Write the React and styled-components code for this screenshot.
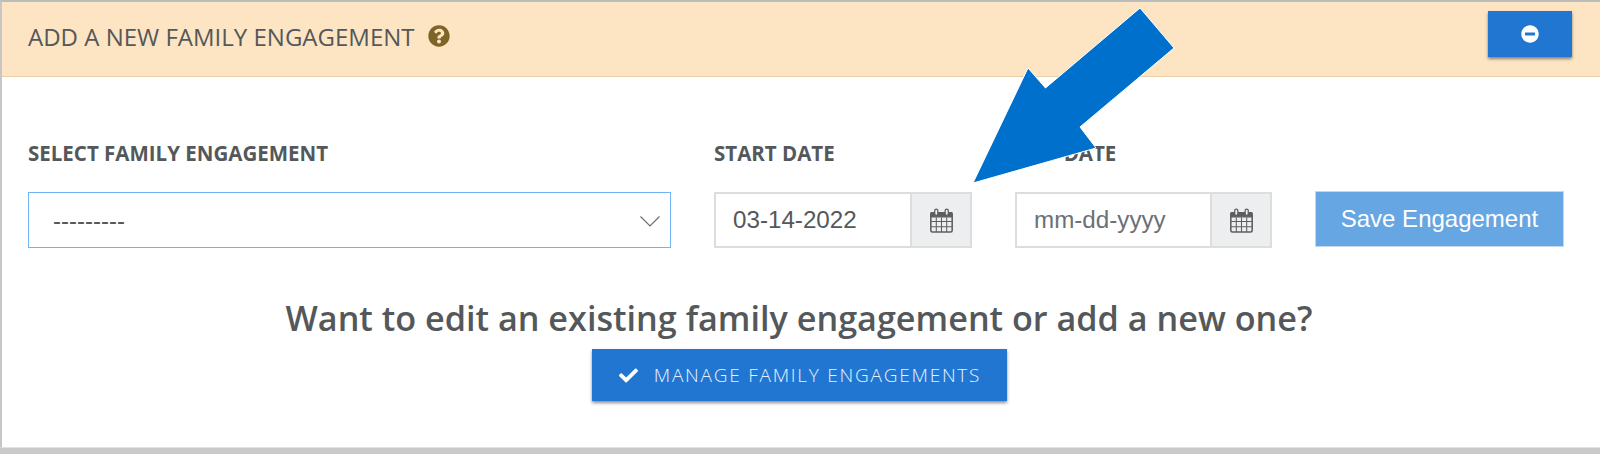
import React from "react";
import styled, { createGlobalStyle } from "styled-components";
import { FaQuestionCircle, FaMinusCircle, FaCheck } from "react-icons/fa";

const Global = createGlobalStyle`
  html, body { margin: 0; padding: 0; background: #c9c9c7; }
  * { box-sizing: border-box; }
`;

const Page = styled.div`
  position: relative;
  width: 1600px;
  height: 454px;
  overflow: hidden;
  background: #c9c9c7;
`;

const Panel = styled.section`
  height: 448px;
  background: #fff;
  border-top: 2px solid #b9bdbd;
  border-left: 2px solid #c6c6c6;
  border-bottom: 1px solid #e2e2de;
`;

const Header = styled.header`
  height: 75px;
  display: flex;
  align-items: center;
  justify-content: space-between;
  padding: 0 28px 6px 26px;
  background: #fde5c4;
  border-bottom: 1px solid #e8cfa8;
`;

const Title = styled.h2`
  display: flex;
  align-items: center;
  gap: 13px;
  margin: 0;
  font: 400 24px "Open Sans", sans-serif;
  color: #54585a;
`;

const Help = styled(FaQuestionCircle)`
  width: 22px;
  height: 22px;
  color: #7f6428;
`;

const CollapseButton = styled.button`
  width: 84px;
  height: 46px;
  margin-top: -4px;
  display: flex;
  align-items: center;
  justify-content: center;
  background: #2176d2;
  color: #fff;
  border: none;
  box-shadow: 0 2px 3px rgba(0, 0, 0, 0.45);
  font-size: 18px;
`;

const Form = styled.div`
  display: grid;
  grid-template-columns: 643px 258px 257px 249px;
  column-gap: 43px;
  padding: 64px 0 0 26px;
`;

const Field = styled.div`
  display: flex;
  flex-direction: column;
  gap: 26px;
`;

const Label = styled.label`
  height: 25px;
  font: 700 20.5px/25px "Open Sans", sans-serif;
  color: #54585a;
`;

const SelectBox = styled.div`
  height: 56px;
  display: flex;
  align-items: center;
  justify-content: space-between;
  padding: 2px 10px 0 24px;
  border: 1.5px solid #6db3f5;
  font: 400 24px "Liberation Sans", sans-serif;
  color: #54585a;
`;

const DateGroup = styled.div`
  height: 56px;
  display: flex;
  border: 2px solid #dcdddd;
`;

const DateValue = styled.div`
  flex: 1;
  display: flex;
  align-items: center;
  padding-left: 17px;
  font: 400 24.2px "Liberation Sans", sans-serif;
  color: ${(p) => (p.$placeholder ? "#6b7076" : "#54585a")};
`;

const Addon = styled.div`
  width: 60px;
  display: flex;
  align-items: center;
  justify-content: center;
  background: #edeeef;
  border-left: 2px solid #dcdddd;
`;

const SaveButton = styled.button`
  height: 56px;
  margin-top: 50px;
  background: #66a6e2;
  border: 1px solid #c4d8ec;
  color: #fff;
  font: 400 24px "Liberation Sans", sans-serif;
`;

const Cta = styled.div`
  display: flex;
  flex-direction: column;
  align-items: center;
  padding: 47px 4px 0 0;
`;

const Question = styled.h3`
  margin: 0;
  font: 600 34.2px/46px "Open Sans", sans-serif;
  color: #54585a;
`;

const ManageButton = styled.button`
  width: 415px;
  height: 52px;
  margin-top: 8px;
  display: flex;
  align-items: center;
  justify-content: center;
  gap: 16px;
  padding-left: 8px;
  background: #2176d2;
  color: #e8f2fc;
  border: none;
  box-shadow: 0 2px 3px rgba(0, 0, 0, 0.45);
  font: 300 19px "Open Sans", sans-serif;
  letter-spacing: 1.76px;
`;

const Arrow = styled.svg`
  position: absolute;
  left: 0;
  top: 0;
  pointer-events: none;
`;

const Calendar = () => (
  <svg width="23" height="25" viewBox="0 0 22 24" fill="none" stroke="#5b5f61">
    <rect x="0.75" y="4.5" width="20.5" height="18.5" rx="1.5" strokeWidth="1.5" />
    <path d="M1 4.5h20v4H1z" fill="#5b5f61" />
    <path d="M1 13h20M1 18h20M6 9v14M11 9v14M16 9v14" strokeWidth="1" />
    <rect x="4.5" y="1" width="3" height="6" rx="1.5" fill="#edeeef" strokeWidth="1.2" />
    <rect x="14.5" y="1" width="3" height="6" rx="1.5" fill="#edeeef" strokeWidth="1.2" />
  </svg>
);

const Chevron = () => (
  <svg width="20" height="11" viewBox="0 0 20 11" fill="none" stroke="#6a6e70" strokeWidth="1.2">
    <path d="M0.5 0.5L10 10l9.5-9.5" />
  </svg>
);

export default function App() {
  return (
    <Page>
      <Global />
      <Panel>
        <Header>
          <Title>
            ADD A NEW FAMILY ENGAGEMENT <Help />
          </Title>
          <CollapseButton aria-label="Collapse">
            <FaMinusCircle />
          </CollapseButton>
        </Header>
        <Form>
          <Field>
            <Label>SELECT FAMILY ENGAGEMENT</Label>
            <SelectBox>
              ---------
              <Chevron />
            </SelectBox>
          </Field>
          <Field>
            <Label>START DATE</Label>
            <DateGroup>
              <DateValue>03-14-2022</DateValue>
              <Addon>
                <Calendar />
              </Addon>
            </DateGroup>
          </Field>
          <Field>
            <Label>END DATE</Label>
            <DateGroup>
              <DateValue $placeholder>mm-dd-yyyy</DateValue>
              <Addon>
                <Calendar />
              </Addon>
            </DateGroup>
          </Field>
          <SaveButton>Save Engagement</SaveButton>
        </Form>
        <Cta>
          <Question>Want to edit an existing family engagement or add a new one?</Question>
          <ManageButton>
            <FaCheck size={19} color="#fff" />
            MANAGE FAMILY ENGAGEMENTS
          </ManageButton>
        </Cta>
      </Panel>
      <Arrow width="1600" height="454" viewBox="0 0 1600 454">
        <polygon
          points="1140,8 1174,48 1080,127 1096,148 973,183 1028,68 1045.5,88"
          fill="#0070cd"
          stroke="#fff"
          strokeWidth="1"
        />
      </Arrow>
    </Page>
  );
}
